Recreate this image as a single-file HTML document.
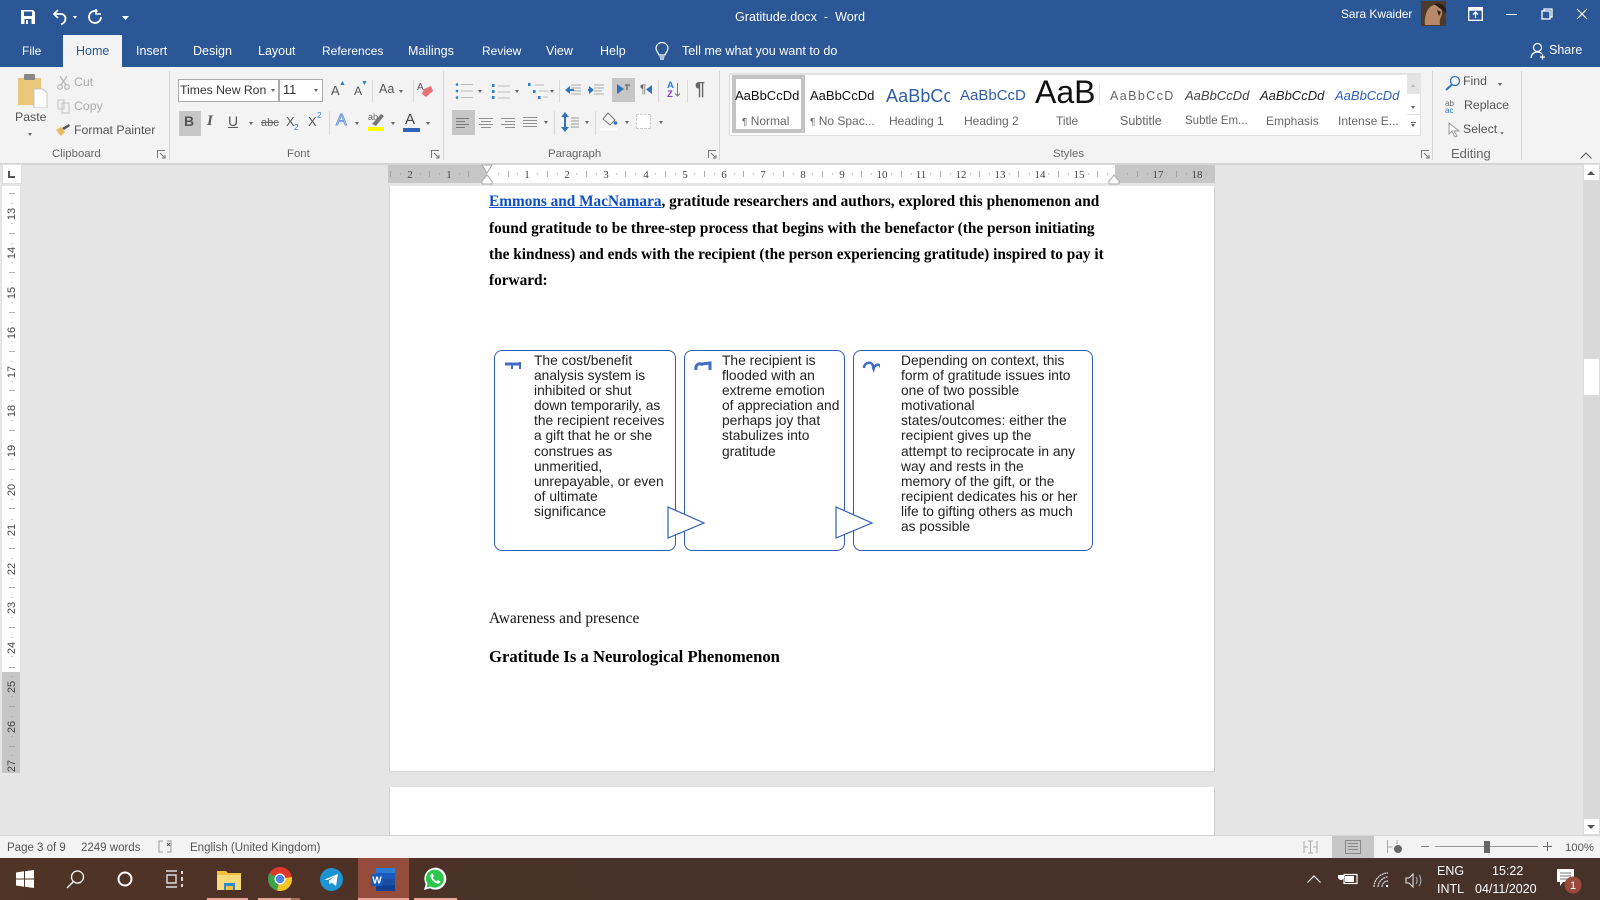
<!DOCTYPE html>
<html lang="en"><head><meta charset="utf-8"><title>Gratitude.docx - Word</title>
<style>
html,body{margin:0;padding:0}
body{width:1600px;height:900px;overflow:hidden;position:relative;background:#e5e5e5;font-family:"Liberation Sans",sans-serif;color:#444}
div,span.t,svg{position:absolute}
.t{position:absolute;white-space:nowrap;line-height:16px}
.w{color:#fff;font-size:12.5px}
.r{font-size:12.3px;color:#555}
.g{color:#aaa}
.s{font-size:11.4px;color:#666}
.gr{position:absolute;top:71px;width:1px;height:89px;background:#d4d4d4}
.sp{position:absolute;width:1px;background:#d8d8d8}
.ch{position:absolute;width:0;height:0;border-left:2.5px solid transparent;border-right:2.5px solid transparent;border-top:3px solid #666}
.n{font-size:11px;color:#444;font-family:"Liberation Serif",serif;width:20px;text-align:center;top:167px}
.v{font-size:11px;color:#444;left:2px;width:20px;height:14px;line-height:14px;text-align:center;transform:rotate(-90deg)}
.d{font-family:"Liberation Serif",serif;font-weight:bold;font-size:15.3px;color:#000;left:489px}
.b{font-size:13.8px;color:#222;line-height:15.1px;position:absolute;white-space:nowrap}
.box{position:absolute;border:1.3px solid #2f5db5;border-radius:8px;background:#fff;box-sizing:border-box}
.st{font-size:13px;color:#111;font-family:"Liberation Sans",sans-serif}
.sl{font-size:12px;color:#666}
.tb{position:absolute;top:898px;height:2px;background:#e9a595}
</style></head><body>

<!-- title bar -->
<div style="left:0;top:0;width:1600px;height:67px;background:#2b5797"></div>
<svg style="left:20px;top:9px" width="16" height="16" viewBox="0 0 16 16"><path d="M1 1h12l2 2v12H1z" fill="#fff"/><rect x="4" y="2.500" width="8" height="4.500" fill="#2b5797"/><rect x="4.500" y="10" width="7" height="5" fill="#2b5797"/><rect x="6" y="11" width="2" height="4" fill="#fff"/></svg>
<svg style="left:52px;top:9px" width="16" height="17" viewBox="0 0 16 17" fill="none" stroke="#fff" stroke-width="1.800"><path d="M6 1L2 5l4 4"/><path d="M2 5h7a4.500 4.500 0 0 1 4.500 4.500c0 3-2 5-4.500 6"/></svg>
<div class="ch" style="left:73px;top:16px;border-top-color:#fff"></div>
<svg style="left:87px;top:9px" width="16" height="16" viewBox="0 0 16 16" fill="none" stroke="#fff" stroke-width="1.800"><path d="M10.500 2.500a6 6 0 1 0 3.500 5.500"/><path d="M9 0v5h5" stroke-width="1.600"/></svg>
<svg style="left:122px;top:14px" width="7" height="7" viewBox="0 0 7 7"><path d="M0 2h7L3.500 6z" fill="#fff"/></svg>
<span class="t" style="left:735px;top:9px;color:#fff;font-size:12.6px">Gratitude.docx&nbsp; -&nbsp; Word</span>
<span class="t w" style="left:1341px;top:6px;font-size:11.9px">Sara Kwaider</span>
<svg style="left:1421px;top:1px" width="25" height="25" viewBox="0 0 25 25"><rect width="25" height="25" fill="#4f3a2a"/><path d="M4 24C3 14 7 5 13 4c5-1 9 3 8 9-1 4-3 5-2 11z" fill="#b88968"/><path d="M13 3c5-2 10 1 12 5v4c-3-2-6-5-12-9z" fill="#2d1c14"/><path d="M16 9l4 2-2 4z" fill="#2a1a12"/></svg>
<svg style="left:1468px;top:7px" width="15" height="14" viewBox="0 0 15 14"><rect x=".7" y=".7" width="13.600" height="12.600" fill="none" stroke="#fff" stroke-width="1.300"/><rect x=".7" y=".7" width="13.600" height="3" fill="#fff"/><path d="M7.500 5v6M5 7.500l2.500-2.500 2.500 2.500" fill="none" stroke="#fff" stroke-width="1.300"/></svg>
<div style="left:1506px;top:14px;width:11px;height:1px;background:#fff"></div>
<svg style="left:1541px;top:8px" width="12" height="12" viewBox="0 0 12 12" fill="none" stroke="#fff" stroke-width="1.300"><rect x="1" y="3" width="8" height="8"/><path d="M3 3V1h8v8H9"/></svg>
<svg style="left:1576px;top:8px" width="12" height="12" viewBox="0 0 12 12" stroke="#fff" stroke-width="1.200"><path d="M1 1l10 10M11 1L1 11"/></svg>

<!-- tabs -->
<span class="t w" style="left:22px;top:43px;font-size:12px">File</span>
<div style="left:63px;top:35px;width:59px;height:33px;background:#f3f3f3"></div>
<span class="t" style="left:76px;top:43px;color:#2b5797;font-size:12.5px">Home</span>
<span class="t w" style="left:136px;top:43px">Insert</span>
<span class="t w" style="left:193px;top:43px">Design</span>
<span class="t w" style="left:258px;top:43px">Layout</span>
<span class="t w" style="left:322px;top:43px;font-size:12px">References</span>
<span class="t w" style="left:408px;top:43px">Mailings</span>
<span class="t w" style="left:482px;top:43px;font-size:12px">Review</span>
<span class="t w" style="left:546px;top:43px">View</span>
<span class="t w" style="left:600px;top:43px">Help</span>
<svg style="left:654px;top:42px" width="16" height="19" viewBox="0 0 16 19" fill="none" stroke="#fff" stroke-width="1.200"><path d="M5 13C4 10 2 9 2 6.500a6 6 0 0 1 12 0C14 9 12 10 11 13z"/><path d="M5.500 15h5M6 17h4"/></svg>
<span class="t w" style="left:682px;top:43px;font-size:12.6px">Tell me what you want to do</span>
<svg style="left:1530px;top:42px" width="16" height="18" viewBox="0 0 16 18" fill="none" stroke="#fff" stroke-width="1.200"><circle cx="7.500" cy="5.500" r="4"/><path d="M1 16c.5-4 3-6 6.500-6 2 0 3.500.7 4.500 2M10 15h5M12.500 12.500v5"/></svg>
<span class="t w" style="left:1549px;top:42px">Share</span>

<!-- ribbon -->
<div style="left:0;top:67px;width:1600px;height:96px;background:#f3f3f3;border-bottom:2px solid #d5d5d5"></div>
<div class="gr" style="left:169px"></div><div class="gr" style="left:443px"></div><div class="gr" style="left:719px"></div><div class="gr" style="left:1432px"></div><div class="gr" style="left:1521px"></div>

<!-- clipboard -->
<svg style="left:18px;top:74px" width="30" height="34" viewBox="0 0 30 34"><rect x="0" y="4" width="23" height="27" fill="#eac67a"/><rect x="6" y="0" width="11" height="6" rx="1" fill="#888"/><path d="M16 15h9l4 4v15H16z" fill="#fff" stroke="#c5c5c5"/></svg>
<span class="t r" style="left:15px;top:109px">Paste</span>
<div class="ch" style="left:28px;top:133px"></div>
<svg style="left:57px;top:75px" width="13" height="15" viewBox="0 0 13 15" fill="none" stroke="#b5b5b5" stroke-width="1.200"><circle cx="3" cy="12" r="2.300"/><circle cx="10" cy="12" r="2.300"/><path d="M4 10L10 1M9 10L3 1"/></svg>
<span class="t r g" style="left:74px;top:74px">Cut</span>
<svg style="left:57px;top:99px" width="13" height="15" viewBox="0 0 13 15" fill="none" stroke="#c0c0c0"><path d="M1 1h6v9H1zM5 4h7v10H5z" fill="#f3f3f3"/></svg>
<span class="t r g" style="left:74px;top:98px">Copy</span>
<svg style="left:56px;top:124px" width="14" height="13" viewBox="0 0 14 13"><path d="M0 6l5-3 4 5-4 4z" fill="#e8b95f"/><path d="M6 4l7-4 1 2-6 4z" fill="#555"/></svg>
<span class="t" style="left:74px;top:122px;font-size:12.3px;color:#555">Format Painter</span>
<span class="t s" style="left:52px;top:146px">Clipboard</span>
<svg style="left:157px;top:150px" width="9" height="9" viewBox="0 0 9 9" fill="none" stroke="#777"><path d="M.5 8V.5H8M3 3l5 5M8 5v3H5"/></svg>

<!-- font -->
<div style="left:178px;top:79px;width:101px;height:23px;background:#fff;border:1px solid #aaa;box-sizing:border-box"></div>
<div style="left:279px;top:79px;width:44px;height:23px;background:#fff;border:1px solid #aaa;box-sizing:border-box"></div>
<span class="t" style="left:180px;top:82px;font-size:12.2px;color:#333">Times New Ron</span>
<div class="ch" style="left:271px;top:89px"></div>
<span class="t" style="left:283px;top:82px;font-size:12.8px;color:#333">11</span>
<div class="ch" style="left:314px;top:89px"></div>
<span class="t" style="left:331px;top:83px;font-size:13px;color:#555">A</span><span class="t" style="left:339px;top:76px;font-size:7px;color:#2b7cd3">▲</span>
<span class="t" style="left:354px;top:83px;font-size:12px;color:#555">A</span><span class="t" style="left:361px;top:76px;font-size:7px;color:#2b7cd3">▼</span>
<div class="sp" style="left:372px;top:80px;height:22px"></div>
<span class="t" style="left:379px;top:81px;font-size:12.500px;color:#555">Aa</span><div class="ch" style="left:399px;top:90px"></div>
<div class="sp" style="left:413px;top:80px;height:22px"></div>
<svg style="left:417px;top:81px" width="17" height="18" viewBox="0 0 17 18"><path d="M7 8l7-3 2 5-7 6-4-3z" fill="#e8707a"/><text x="0" y="9" font-size="10" fill="#555" font-family="Liberation Sans">A</text></svg>
<div style="left:179px;top:111px;width:22px;height:25px;background:#c6c6c6"></div>
<span class="t" style="left:184px;top:113px;font-size:14px;font-weight:bold;color:#555">B</span>
<span class="t" style="left:207px;top:113px;font-size:15px;font-style:italic;color:#555;font-family:'Liberation Serif',serif;font-weight:bold">I</span>
<span class="t" style="left:228px;top:113px;font-size:14px;color:#555;text-decoration:underline">U</span>
<div class="ch" style="left:249px;top:122px"></div>
<span class="t" style="left:261px;top:115px;font-size:11px;color:#666;text-decoration:line-through">abc</span>
<span class="t" style="left:286px;top:114px;font-size:13px;color:#555">X</span><span class="t" style="left:294px;top:120px;font-size:8px;color:#2b7cd3">2</span>
<span class="t" style="left:308px;top:114px;font-size:13px;color:#555">X</span><span class="t" style="left:317px;top:108px;font-size:8px;color:#2b7cd3">2</span>
<div class="sp" style="left:329px;top:111px;height:24px"></div>
<span class="t" style="left:336px;top:113px;font-size:16px;color:#fff;-webkit-text-stroke:1px #6b9bd8">A</span><div class="ch" style="left:355px;top:122px"></div>
<svg style="left:368px;top:111px" width="17" height="21" viewBox="0 0 17 21"><rect x="0" y="16" width="16" height="4" fill="#ffff00"/><path d="M4 13L13 3l3 2-8 10z" fill="#777"/><text x="0" y="9" font-size="9" fill="#666" font-family="Liberation Sans">ab</text></svg>
<div class="ch" style="left:391px;top:122px"></div>
<span class="t" style="left:405px;top:112px;font-size:15px;color:#444">A</span><div style="left:403px;top:128px;width:17px;height:4px;background:#2e62b8"></div>
<div class="ch" style="left:426px;top:122px"></div>
<span class="t s" style="left:287px;top:146px">Font</span>
<svg style="left:431px;top:150px" width="9" height="9" viewBox="0 0 9 9" fill="none" stroke="#777"><path d="M.5 8V.5H8M3 3l5 5M8 5v3H5"/></svg>

<!-- paragraph -->
<svg style="left:455px;top:82px" width="112" height="20" viewBox="0 0 112 20" fill="none" stroke="#bbb" stroke-width="1"><path d="M6 2.500h12M6 9h12M6 15.500h12M43 4h12M43 10h12M43 16h12M80 3h9M84 9h9M88 15h5"/><g fill="#2b7cd3" stroke="none"><circle cx="2" cy="2.500" r="1.300"/><circle cx="2" cy="9" r="1.300"/><circle cx="2" cy="15.500" r="1.300"/><rect x="37" y="2" width="2.500" height="3"/><rect x="37" y="8" width="2.500" height="3"/><rect x="37" y="14" width="2.500" height="3"/><rect x="73" y="1" width="2.500" height="3"/><rect x="78" y="8" width="2.500" height="3"/><rect x="83" y="14" width="2.500" height="3"/></g></svg>
<div class="ch" style="left:478px;top:90px"></div><div class="ch" style="left:515px;top:90px"></div><div class="ch" style="left:550px;top:90px"></div>
<div class="sp" style="left:559px;top:80px;height:22px"></div>
<svg style="left:565px;top:83px" width="40" height="14" viewBox="0 0 40 14"><path d="M6 2h10M6 5h10M8 8h8M6 11h10M29 2h10M29 5h10M29 8h8M29 11h10" stroke="#aaa" fill="none"/><path d="M0 7l5-4v8z" fill="#2f74bd"/><path d="M2 7h7" stroke="#2f74bd" stroke-width="2"/><path d="M29 7l-5-4v8z" fill="#2f74bd"/><path d="M23 7h4" stroke="#2f74bd" stroke-width="2"/></svg>
<div style="left:612px;top:78px;width:23px;height:24px;background:#c6c6c6"></div>
<svg style="left:616px;top:83px" width="16" height="13" viewBox="0 0 16 13"><path d="M1 1l7 5-7 5z" fill="#2f74bd"/><path d="M9 2h5M11 2v5" stroke="#666" fill="none" stroke-width="1.300"/></svg>
<span class="t" style="left:640px;top:81px;font-size:12px;color:#666">¶</span>
<svg style="left:646px;top:85px" width="6" height="9" viewBox="0 0 6 9"><path d="M6 0L0 4.500 6 9z" fill="#2f74bd"/></svg>
<div class="sp" style="left:658px;top:80px;height:22px"></div>
<span class="t" style="left:667px;top:78px;font-size:9.500px;color:#2b7cd3;font-weight:bold">A</span><span class="t" style="left:667px;top:87px;font-size:9.500px;color:#8a3fb5;font-weight:bold">Z</span>
<svg style="left:674px;top:83px" width="7" height="14" viewBox="0 0 7 14"><path d="M3.500 0v13M1 10.500l2.500 2.500 2.500-2.500" fill="none" stroke="#777"/></svg>
<div class="sp" style="left:687px;top:80px;height:22px"></div>
<span class="t" style="left:695px;top:81px;font-size:18px;font-weight:bold;color:#666">¶</span>
<div style="left:452px;top:110px;width:23px;height:25px;background:#c6c6c6"></div>
<svg style="left:456px;top:116px" width="84" height="13" viewBox="0 0 84 13" fill="none" stroke="#8f8f8f"><path d="M0 2.500h13M0 5.500h9M0 8.500h13M0 11.500h9" stroke="#777"/><path d="M23 2.500h14M25 5.500h10M23 8.500h14M25 11.500h10M45 2.500h14M49 5.500h10M45 8.500h14M49 11.500h10M67 1.500h14M67 4.500h14M67 7.500h14M67 10.500h14"/></svg>
<div class="ch" style="left:544px;top:121px"></div>
<div class="sp" style="left:554px;top:111px;height:24px"></div>
<svg style="left:561px;top:111px" width="18" height="22" viewBox="0 0 18 22" fill="none"><path d="M4 2v18" stroke="#2f74bd" stroke-width="2"/><path d="M0 6l4-5 4 5zM0 16l4 5 4-5z" fill="#2f74bd"/><path d="M10 7h8M10 10h8M10 13h8M10 16h8" stroke="#999"/></svg>
<div class="ch" style="left:585px;top:121px"></div>
<div class="sp" style="left:595px;top:111px;height:24px"></div>
<svg style="left:600px;top:110px" width="18" height="24" viewBox="0 0 18 24" fill="none"><path d="M8 3l7 7-5 5-7-6z" stroke="#777"/><circle cx="15.500" cy="13" r="1.800" fill="#2f74bd"/><rect x="0" y="18" width="17" height="2.500" fill="#fff"/></svg>
<div class="ch" style="left:625px;top:121px"></div>
<div style="left:636px;top:114px;width:15px;height:15px;background:#fff;border:1px dashed #ccc;box-sizing:border-box"></div>
<div class="ch" style="left:659px;top:121px"></div>
<span class="t s" style="left:548px;top:146px">Paragraph</span>
<svg style="left:708px;top:150px" width="9" height="9" viewBox="0 0 9 9" fill="none" stroke="#777"><path d="M.5 8V.5H8M3 3l5 5M8 5v3H5"/></svg>

<!-- styles -->
<div style="left:729px;top:73px;width:692px;height:63px;background:#fff;border-top:2px solid #e2e2e2;border-bottom:1px solid #ddd;border-left:1px solid #ddd;border-right:1px solid #ddd;box-sizing:border-box"></div>
<div style="left:732px;top:75px;width:73px;height:58px;border:4px solid #c4c4c4;box-sizing:border-box;background:#fff"></div>
<div style="left:1407px;top:75px;width:14px;height:19px;background:#e4e4e4"></div>
<div style="left:1407px;top:114px;width:14px;height:1px;background:#ddd"></div>
<div class="ch" style="left:1411px;top:84px;border-top:0;border-bottom:3px solid #bbb"></div>
<div class="ch" style="left:1411px;top:106px"></div>
<div class="ch" style="left:1411px;top:124px"></div><div style="left:1411px;top:122px;width:5px;height:1px;background:#666"></div>
<span class="t st" style="left:735px;top:88px">AaBbCcDd</span>
<span class="t sl" style="left:742px;top:113px"><span style="font-size:10px">¶</span> Normal</span>
<span class="t st" style="left:810px;top:88px">AaBbCcDd</span>
<span class="t sl" style="left:810px;top:113px"><span style="font-size:10px">¶</span> No Spac...</span>
<div style="left:886px;top:82px;width:64px;height:28px;overflow:hidden"><span class="t" style="left:0;top:6px;font-size:18px;color:#2e5fa8;letter-spacing:.1px">AaBbCc</span></div>
<span class="t sl" style="left:889px;top:113px">Heading 1</span>
<div style="left:960px;top:82px;width:66px;height:28px;overflow:hidden"><span class="t" style="left:0;top:6px;font-size:15px;color:#2e5fa8">AaBbCcD</span></div>
<span class="t sl" style="left:964px;top:113px">Heading 2</span>
<span class="t" style="left:1035px;top:84px;font-size:32px;color:#111">AaB</span>
<span class="t sl" style="left:1056px;top:113px">Title</span>
<div style="left:1099px;top:83px;width:1px;height:22px;background:#e6e6e6"></div>
<span class="t st" style="left:1110px;top:88px;color:#666;letter-spacing:1.400px;font-size:12.500px">AaBbCcD</span>
<span class="t sl" style="left:1120px;top:113px;font-size:12.500px">Subtitle</span>
<span class="t st" style="left:1185px;top:88px;font-style:italic;color:#444">AaBbCcDd</span>
<span class="t sl" style="left:1185px;top:113px;font-size:11.500px">Subtle Em...</span>
<span class="t st" style="left:1260px;top:88px;font-style:italic;color:#222">AaBbCcDd</span>
<span class="t sl" style="left:1266px;top:113px">Emphasis</span>
<span class="t st" style="left:1335px;top:88px;font-style:italic;color:#2e62b8">AaBbCcDd</span>
<span class="t sl" style="left:1338px;top:113px">Intense E...</span>
<span class="t s" style="left:1053px;top:146px">Styles</span>
<svg style="left:1421px;top:150px" width="9" height="9" viewBox="0 0 9 9" fill="none" stroke="#777"><path d="M.5 8V.5H8M3 3l5 5M8 5v3H5"/></svg>

<!-- editing -->
<svg style="left:1445px;top:75px" width="16" height="16" viewBox="0 0 16 16" fill="none" stroke="#2f74bd" stroke-width="1.300"><circle cx="10" cy="6" r="4.500"/><path d="M7 9.500L1 15" stroke-width="2"/></svg>
<span class="t r" style="left:1463px;top:73px">Find</span><div class="ch" style="left:1498px;top:83px"></div>
<span class="t" style="left:1445px;top:100px;font-size:8px;line-height:8px;color:#666">ab</span><span class="t" style="left:1445px;top:107px;font-size:8px;line-height:8px;color:#2f74bd">ac</span>
<span class="t r" style="left:1464px;top:97px">Replace</span>
<svg style="left:1448px;top:122px" width="12" height="17" viewBox="0 0 12 17" fill="#fff" stroke="#999"><path d="M1 1v11l3-3 3 6 2-1-3-5h5z"/></svg>
<span class="t r" style="left:1463px;top:121px">Select</span><div class="ch" style="left:1500px;top:132px;transform:scale(.8)"></div>
<span class="t" style="left:1451px;top:146px;font-size:13px;color:#666">Editing</span>
<svg style="left:1580px;top:152px" width="12" height="7" viewBox="0 0 12 7" fill="none" stroke="#555"><path d="M.5 6.500L6 1l5.500 5.500"/></svg>

<!-- canvas -->
<div style="left:0;top:165px;width:1600px;height:670px;background:#e5e5e5"></div>
<div style="left:2px;top:164px;width:20px;height:20px;background:#fff;border:1px solid #ddd;box-sizing:border-box"></div>
<svg style="left:8px;top:171px" width="7" height="7" viewBox="0 0 7 7"><path d="M0 0h2v5h5v2H0z" fill="#555"/></svg>
<!-- horizontal ruler -->
<div style="left:388px;top:165px;width:827px;height:18px;background:#fff"></div>
<div style="left:388px;top:165px;width:99px;height:18px;background:#c6c6c6"></div>
<div style="left:1115px;top:165px;width:100px;height:18px;background:#c6c6c6"></div>
<svg style="left:0;top:160px" width="1600" height="30" viewBox="0 160 1600 30" fill="none" stroke="#999"><path d="M390.500 171v6M429.500 171v6M468.500 171v6M508.500 171v6M547.500 171v6M586.500 171v6M625.500 171v6M665.500 171v6M704.500 171v6M743.500 171v6M783.500 171v6M822.500 171v6M861.500 171v6M901.500 171v6M940.500 171v6M979.500 171v6M1018.500 171v6M1058.500 171v6M1097.500 171v6M1137.500 171v6M1176.500 171v6" stroke-width=".8"/><path d="M400.500 173.500v1M420.500 173.500v1M439.500 173.500v1M459.500 173.500v1M498.500 173.500v1M517.500 173.500v1M537.500 173.500v1M557.500 173.500v1M576.500 173.500v1M596.500 173.500v1M616.500 173.500v1M635.500 173.500v1M655.500 173.500v1M675.500 173.500v1M694.500 173.500v1M714.500 173.500v1M734.500 173.500v1M753.500 173.500v1M773.500 173.500v1M793.500 173.500v1M812.500 173.500v1M832.500 173.500v1M852.500 173.500v1M871.500 173.500v1M891.500 173.500v1M911.500 173.500v1M930.500 173.500v1M950.500 173.500v1M970.500 173.500v1M989.500 173.500v1M1009.500 173.500v1M1029.500 173.500v1M1048.500 173.500v1M1068.500 173.500v1M1088.500 173.500v1M1107.500 173.500v1M1127.500 173.500v1M1147.500 173.500v1M1166.500 173.500v1M1186.500 173.500v1M1206.500 173.500v1"/><path d="M482 165h10l-5 8zM482 184h10v-3l-5-6-5 6zM1109 184h10v-3l-5-6-5 6z" fill="#fff" stroke="#aaa"/></svg>
<span class="t n" style="left:400px">2</span><span class="t n" style="left:439px">1</span>
<span class="t n" style="left:517px">1</span><span class="t n" style="left:557px">2</span><span class="t n" style="left:596px">3</span><span class="t n" style="left:636px">4</span><span class="t n" style="left:675px">5</span><span class="t n" style="left:714px">6</span><span class="t n" style="left:753px">7</span><span class="t n" style="left:793px">8</span><span class="t n" style="left:832px">9</span><span class="t n" style="left:872px">10</span><span class="t n" style="left:911px">11</span><span class="t n" style="left:951px">12</span><span class="t n" style="left:990px">13</span><span class="t n" style="left:1030px">14</span><span class="t n" style="left:1069px">15</span><span class="t n" style="left:1148px">17</span><span class="t n" style="left:1187px">18</span>

<!-- vertical ruler -->
<div style="left:2px;top:186px;width:18px;height:486px;background:#fff"></div>
<div style="left:2px;top:672px;width:18px;height:101px;background:#c6c6c6"></div>
<svg style="left:0;top:186px" width="22" height="590" viewBox="0 186 22 590" fill="none" stroke="#999"><path d="M9 193.500h6M9 233.500h6M9 272.500h6M9 312.500h6M9 351.500h6M9 390.500h6M9 430.500h6M9 469.500h6M9 508.500h6M9 548.500h6M9 587.500h6M9 627.500h6M9 667.500h6M9 706.500h6M9 746.500h6" stroke-width=".8"/><path d="M11.500 203.500h1M11.500 223.500h1M11.500 243.500h1M11.500 262.500h1M11.500 282.500h1M11.500 302.500h1M11.500 322.500h1M11.500 341.500h1M11.500 361.500h1M11.500 381.500h1M11.500 400.500h1M11.500 420.500h1M11.500 440.500h1M11.500 459.500h1M11.500 479.500h1M11.500 499.500h1M11.500 519.500h1M11.500 538.500h1M11.500 558.500h1M11.500 578.500h1M11.500 597.500h1M11.500 617.500h1M11.500 637.500h1M11.500 656.500h1M11.500 676.500h1M11.500 696.500h1M11.500 716.500h1M11.500 736.500h1M11.500 755.500h1"/></svg>
<span class="t v" style="top:207px">13</span><span class="t v" style="top:246px">14</span><span class="t v" style="top:286px">15</span><span class="t v" style="top:326px">16</span><span class="t v" style="top:365px">17</span><span class="t v" style="top:404px">18</span><span class="t v" style="top:444px">19</span><span class="t v" style="top:483px">20</span><span class="t v" style="top:523px">21</span><span class="t v" style="top:562px">22</span><span class="t v" style="top:601px">23</span><span class="t v" style="top:641px">24</span><span class="t v" style="top:680px">25</span><span class="t v" style="top:720px">26</span><span class="t v" style="top:759px">27</span>

<!-- scrollbar -->
<div style="left:1583px;top:165px;width:17px;height:670px;background:#d9d9d9"></div>
<div style="left:1583px;top:164px;width:17px;height:17px;background:#fff;border:1px solid #ddd;box-sizing:border-box"></div>
<div class="ch" style="left:1587px;top:171px;border-left-width:4px;border-right-width:4px;border-top:0;border-bottom:4px solid #555"></div>
<div style="left:1583px;top:358px;width:17px;height:38px;background:#fff;border:1px solid #ddd;box-sizing:border-box"></div>
<div style="left:1583px;top:818px;width:17px;height:17px;background:#fff;border:1px solid #ddd;box-sizing:border-box"></div>
<div class="ch" style="left:1587px;top:825px;border-left-width:4px;border-right-width:4px;border-top:4px solid #555"></div>

<!-- pages -->
<div style="left:389px;top:186px;width:826px;height:586px;background:#fff;border-left:1px solid #d0d0d0;border-right:1px solid #d0d0d0;border-bottom:1px solid #d6d6d6;box-sizing:border-box"></div>
<div style="left:389px;top:787px;width:826px;height:48px;background:#fff;border-left:1px solid #d0d0d0;border-right:1px solid #d0d0d0;box-sizing:border-box"></div>

<span class="t d" style="top:194px"><span style="color:#0b4fc4;text-decoration:underline">Emmons and MacNamara</span>, gratitude researchers and authors, explored this phenomenon and</span>
<span class="t d" style="top:221px">found gratitude to be three-step process that begins with the benefactor (the person initiating</span>
<span class="t d" style="top:247px">the kindness) and ends with the recipient (the person experiencing gratitude) inspired to pay it</span>
<span class="t d" style="top:273px">forward:</span>

<div class="box" style="left:494px;top:350px;width:182px;height:201px"></div>
<div class="box" style="left:684px;top:350px;width:161px;height:201px"></div>
<div class="box" style="left:853px;top:350px;width:240px;height:201px"></div>
<svg style="left:660px;top:500px" width="220" height="50" viewBox="660 500 220 50" fill="#fff" stroke="#2f5db5" stroke-width="1.200"><path d="M668 507l36 16-36 15z"/><path d="M836 507l36 16-36 15z"/></svg>
<svg style="left:500px;top:355px" width="380" height="20" viewBox="500 355 380 20" fill="none" stroke="#3f6cc4" stroke-width="3"><path d="M505 364h16"/><path d="M512 365v4M520 362v7" stroke-width="2"/><path d="M696 370c-1-5 3-8 7-5M702 364l8-1v7"/><path d="M864 368c0-6 8-7 9-2 0 1 0 2 .5 3 1-5 7-6 7.500-1" stroke-width="2.500"/></svg>
<div class="b" style="left:534px;top:353px">The cost/benefit<br>analysis system is<br>inhibited or shut<br>down temporarily, as<br>the recipient receives<br>a gift that he or she<br>construes as<br>unmeritied,<br>unrepayable, or even<br>of ultimate<br>significance</div>
<div class="b" style="left:722px;top:353px">The recipient is<br>flooded with an<br>extreme emotion<br>of appreciation and<br>perhaps joy that<br>stabulizes into<br>gratitude</div>
<div class="b" style="left:901px;top:353px">Depending on context, this<br>form of gratitude issues into<br>one of two possible<br>motivational<br>states/outcomes: either the<br>recipient gives up the<br>attempt to reciprocate in any<br>way and rests in the<br>memory of the gift, or the<br>recipient dedicates his or her<br>life to gifting others as much<br>as possible</div>

<span class="t" style="left:489px;top:611px;font-family:'Liberation Serif',serif;font-size:15.45px;color:#111">Awareness and presence</span>
<span class="t" style="left:489px;top:649px;font-family:'Liberation Serif',serif;font-size:16.65px;font-weight:bold;color:#000">Gratitude Is a Neurological Phenomenon</span>

<!-- status bar -->
<div style="left:0;top:835px;width:1600px;height:23px;background:#f3f3f3;border-top:1px solid #d6d6d6;box-sizing:border-box"></div>
<span class="t" style="left:7px;top:840px;font-size:11.500px;color:#555">Page 3 of 9</span>
<span class="t" style="left:81px;top:840px;font-size:11.500px;color:#555">2249 words</span>
<svg style="left:158px;top:840px" width="15" height="14" viewBox="0 0 15 14" fill="none" stroke="#999"><path d="M5 1H1v11h4M9 1h4v11H9"/><path d="M9 3l3 3M12 3L9 6" stroke="#555"/></svg>
<span class="t" style="left:190px;top:840px;font-size:11.500px;color:#555">English (United Kingdom)</span>
<svg style="left:1303px;top:840px" width="15" height="14" viewBox="0 0 15 14" fill="none" stroke="#aaa"><path d="M1 1v12M14 1v12M1 7h4M10 7h4M7.500 1v12M5 1h5M5 13h5"/></svg>
<div style="left:1332px;top:836px;width:42px;height:22px;background:#c6c6c6"></div>
<svg style="left:1345px;top:840px" width="16" height="14" viewBox="0 0 16 14" fill="none" stroke="#888"><rect x=".5" y=".5" width="15" height="13"/><path d="M3 3.500h10M3 6.500h10M3 9.500h10"/></svg>
<svg style="left:1387px;top:840px" width="16" height="15" viewBox="0 0 16 15"><path d="M.5 0v13M.5 7h5M10 0v4" stroke="#aaa" fill="none"/><circle cx="11" cy="9" r="4" fill="#666"/></svg>
<div style="left:1421px;top:846px;width:8px;height:1px;background:#777"></div>
<div style="left:1435px;top:846px;width:103px;height:1px;background:#999"></div>
<div style="left:1484px;top:841px;width:6px;height:12px;background:#666"></div>
<div style="left:1543px;top:846px;width:9px;height:1px;background:#666"></div><div style="left:1547px;top:842px;width:1px;height:9px;background:#666"></div>
<span class="t" style="left:1565px;top:840px;font-size:11.300px;color:#555">100%</span>

<!-- taskbar -->
<div style="left:0;top:858px;width:1600px;height:42px;background:linear-gradient(90deg,#4e3527 0,#4f3226 15%,#4c3127 25%,#47332a 45%,#47322a 100%)"></div>
<svg style="left:16px;top:870px" width="18" height="18" viewBox="0 0 18 18" fill="#fff"><path d="M0 2.500l8-1.200V8.500H0zM9 1.200L18 0v8.500H9zM0 9.500h8v7.200L0 15.500zM9 9.500h9V18l-9-1.200z"/></svg>
<svg style="left:66px;top:870px" width="19" height="19" viewBox="0 0 19 19" fill="none" stroke="#fff" stroke-width="1.300"><circle cx="11.500" cy="7" r="6"/><path d="M7.500 11.500L1 18"/></svg>
<svg style="left:117px;top:871px" width="16" height="16" viewBox="0 0 16 16" fill="none" stroke="#fff" stroke-width="2"><circle cx="8" cy="8" r="6.500"/></svg>
<svg style="left:165px;top:870px" width="19" height="18" viewBox="0 0 19 18" fill="none" stroke="#ddd" stroke-width="1.400"><path d="M1 1h11M1 17h11M2 5h9v8H2z"/><path d="M17 1v3M17 7v4M17 14v3" stroke-width="2"/></svg>
<svg style="left:217px;top:870px" width="24" height="21" viewBox="0 0 24 21"><path d="M0 1h9l2 2h13v17H0z" fill="#f0c240"/><path d="M0 5h24v15H0z" fill="#f7dc7e"/><rect x="7" y="13" width="11" height="7" fill="#2c8ad4"/><rect x="9" y="16" width="7" height="4" fill="#f0c240"/></svg>
<svg style="left:268px;top:867px" width="24" height="24" viewBox="0 0 24 24"><circle cx="12" cy="12" r="12" fill="#e0392c"/><path d="M12 12L1.600 6A12 12 0 0 0 9 23.600z" fill="#3aa14d"/><path d="M12 12l-3 11.600A12 12 0 0 0 23.900 10 z" fill="#f5c623"/><circle cx="12" cy="12" r="5.500" fill="#fff"/><circle cx="12" cy="12" r="4.200" fill="#4a86e8"/></svg>
<svg style="left:320px;top:868px" width="23" height="23" viewBox="0 0 23 23"><circle cx="11.500" cy="11.500" r="11.500" fill="#1d93d2"/><path d="M4.500 11.500L18 6l-2 12-4.500-3.500-2 2-.5-4 6-4.500-7.500 4z" fill="#fff"/></svg>
<div style="left:358px;top:858px;width:51px;height:42px;background:#944c3d"></div>
<svg style="left:371px;top:868px" width="25" height="23" viewBox="0 0 25 23"><rect x="5" y="0" width="19" height="23" fill="#2b7cd3"/><rect x="5" y="5" width="19" height="6" fill="#185abd"/><rect x="5" y="11" width="19" height="6" fill="#1c4da0"/><rect x="5" y="17" width="19" height="6" fill="#103f91"/><rect x="0" y="6" width="12" height="12" fill="#185abd"/><text x="1.300" y="15.500" font-size="10" font-weight="bold" fill="#fff" font-family="Liberation Sans">W</text></svg>
<svg style="left:423px;top:867px" width="24" height="24" viewBox="0 0 24 24"><path d="M1 23l1.700-6A11 11 0 1 1 7 21.300z" fill="#fff"/><path d="M3.500 20.500l1-3.700A9 9 0 1 1 7.500 19.500z" fill="#2cc64f"/><path d="M8.500 6.500c-1 1-1.500 2.500-.5 4.500 1.500 3 3.500 4.500 6 5.500 1.500.5 3-.5 3.500-2l-2.700-1.500-1.200 1.200c-1.500-.6-3-2-3.800-3.700l1-1.300-1.200-2.700z" fill="#fff"/></svg>
<div class="tb" style="left:207px;width:41px"></div>
<div class="tb" style="left:258px;width:33px"></div><div class="tb" style="left:291px;width:9px;background:#a8705f"></div>
<div class="tb" style="left:358px;width:51px"></div>
<div class="tb" style="left:414px;width:43px"></div>

<svg style="left:1307px;top:875px" width="14" height="8" viewBox="0 0 14 8" fill="none" stroke="#fff" stroke-width="1.200"><path d="M.5 7.500L7 1l6.500 6.500"/></svg>
<svg style="left:1338px;top:872px" width="20" height="14" viewBox="0 0 20 14"><rect x="6" y="2.500" width="13" height="9" fill="none" stroke="#fff" stroke-width="1.200"/><rect x="7" y="4" width="9" height="6" fill="#fff"/><path d="M0 3h6v3l-2 2H2L0 6z" fill="#fff"/></svg>
<svg style="left:1373px;top:872px" width="16" height="16" viewBox="0 0 16 16" fill="none" stroke="#ddd" stroke-width="1.200"><path d="M1 15C1 8 7 1 15 1M5 15c0-4 4-10 10-10M9 15c0-3 2-6 6-6" stroke-dasharray="2 .6"/><circle cx="14" cy="14" r="1.200" fill="#fff" stroke="none"/></svg>
<svg style="left:1405px;top:873px" width="18" height="15" viewBox="0 0 18 15" fill="none" stroke="#ddd" stroke-width="1.100"><path d="M1 5h3l4-4v13l-4-4H1z"/><path d="M11 4c1.500 2 1.500 5 0 7M14 2c2.500 3 2.500 8 0 11" stroke="#aaa"/></svg>
<span class="t" style="left:1437px;top:863px;color:#fff;font-size:12.500px">ENG</span>
<span class="t" style="left:1437px;top:881px;color:#fff;font-size:12.500px">INTL</span>
<span class="t" style="left:1492px;top:863px;color:#fff;font-size:12.500px">15:22</span>
<span class="t" style="left:1475px;top:881px;color:#fff;font-size:12.500px">04/11/2020</span>
<svg style="left:1556px;top:868px" width="28" height="26" viewBox="0 0 28 26"><path d="M1 1h17v13H7l-3 4v-4H1z" fill="#fff"/><path d="M4 5h11M4 8h11M4 11h8" stroke="#777" fill="none"/><circle cx="17" cy="17" r="8.500" fill="#9a4a3c"/><text x="14" y="21" font-size="11" fill="#fff" font-family="Liberation Sans">1</text></svg>
</body></html>
